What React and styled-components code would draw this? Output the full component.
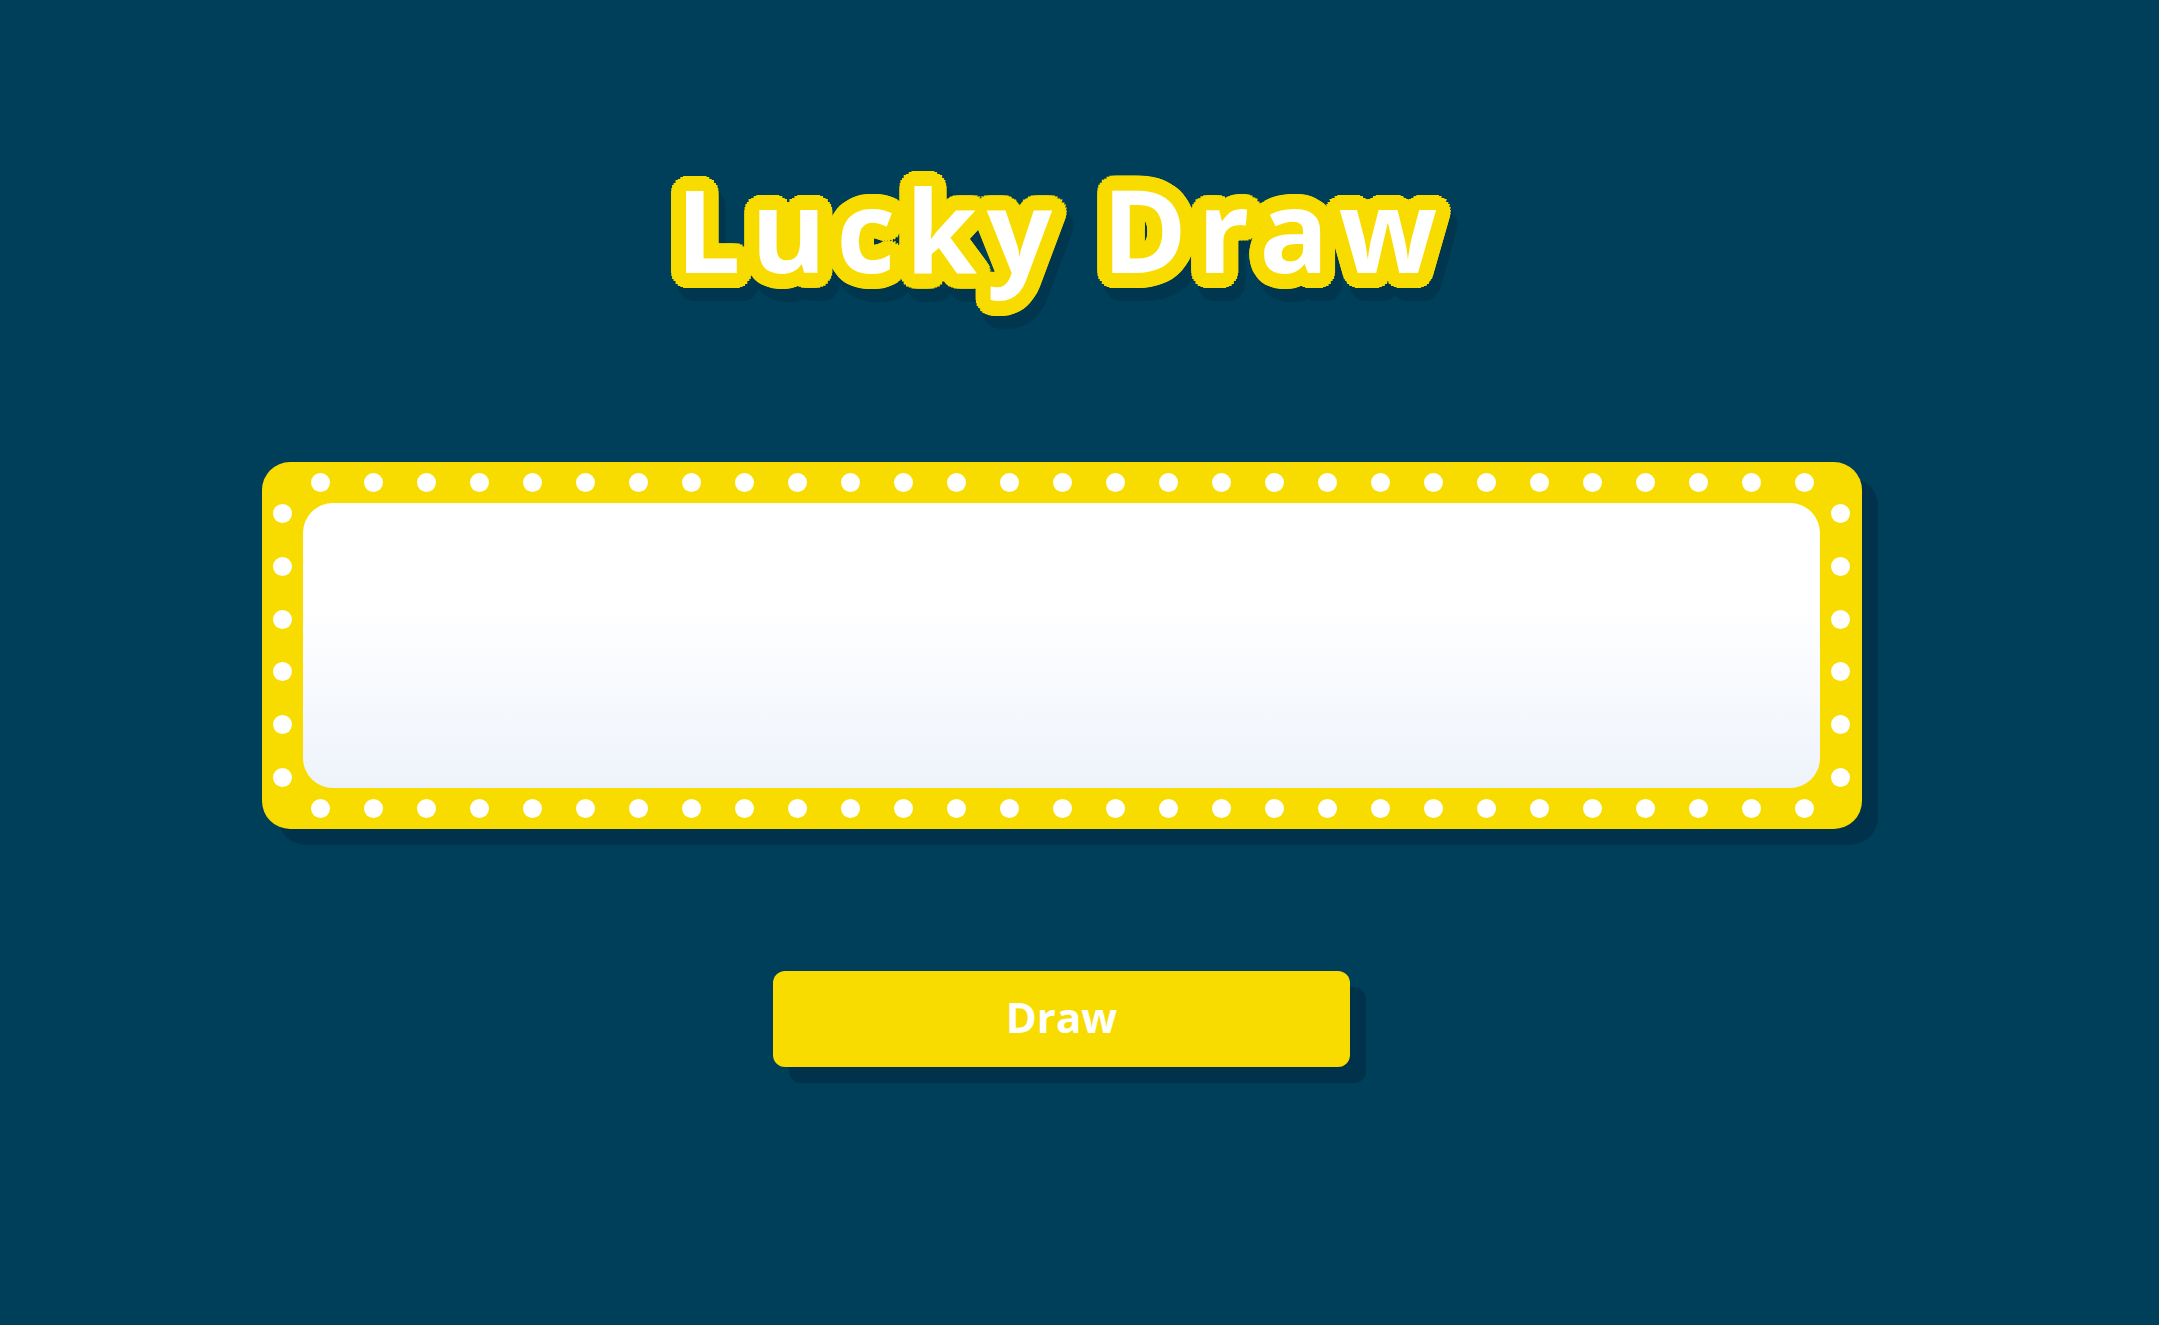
import React from 'react';
import styled, { createGlobalStyle } from 'styled-components';

const GlobalStyle = createGlobalStyle`
	html, body {
		margin: 0;
		padding: 0;
		background: #003f5a;
	}
	body {
		font-family: "Open Sans", "Liberation Sans", sans-serif;
	}
`;

// yellow outline built from rings of text-shadows, then the same ring again, darker and offset
const ring = (r, steps, dx, dy, colour) =>
	Array.from({ length: steps }, (_, i) => {
		const a = (i / steps) * Math.PI * 2;
		const x = (dx + Math.cos(a) * r).toFixed(1);
		const y = (dy + Math.sin(a) * r).toFixed(1);
		return `${x}px ${y}px 0 ${colour}`;
	});

const outline = [
	...ring(15, 32, 0, 0, '#f8dc00'),
	...ring(7.5, 12, 0, 0, '#f8dc00'),
	...ring(15, 32, 7, 13, '#00374f'),
	...ring(7.5, 12, 7, 13, '#00374f'),
].join(', ');

const Page = styled.main`
	box-sizing: border-box;
	min-height: 1325px;
	padding: 171px 36px 0 0;
	display: flex;
	flex-direction: column;
	align-items: center;
	background: #003f5a;
`;

const Title = styled.h1`
	margin: 0;
	font-family: "Open Sans", "Liberation Sans", sans-serif;
	font-weight: 700;
	font-size: 115px;
	line-height: 1;
	letter-spacing: 10px;
	color: #ffffff;
	text-shadow: ${outline};
`;

const Frame = styled.section`
	box-sizing: border-box;
	margin-top: 176px;
	width: 1600px;
	height: 367px;
	display: grid;
	grid-template-columns: 41px 1fr 42px;
	grid-template-rows: 41px 1fr 41px;
	background: #f8dc00;
	border-radius: 28px;
	box-shadow: 16px 16px 0 #00324b;
`;

const DotRow = styled.div`
	grid-column: 1 / -1;
	display: flex;
	align-items: center;
	justify-content: space-between;
	padding: 0 48px 0 49px;
`;

const DotColumn = styled.div`
	display: flex;
	flex-direction: column;
	align-items: center;
	justify-content: space-between;
	padding: 1px 0;
`;

const Bulb = styled.span`
	display: block;
	width: 19px;
	height: 19px;
	border-radius: 50%;
	background: #ffffff;
`;

const Screen = styled.div`
	border-radius: 30px;
	background: linear-gradient(to bottom, #ffffff 35%, #eef3fb 100%);
`;

const DrawButton = styled.button`
	margin-top: 142px;
	width: 577px;
	height: 96px;
	padding: 0 0 5px;
	border: 0;
	border-radius: 12px;
	background: #f8dc00;
	box-shadow: 16px 16px 0 #00324b;
	color: #ffffff;
	font-family: "Open Sans", "Liberation Sans", sans-serif;
	font-weight: 700;
	font-size: 42px;
	cursor: pointer;
`;

const bulbs = (n) => Array.from({ length: n }, (_, i) => <Bulb key={i} />);

export default function App() {
	return (
		<>
			<GlobalStyle />
			<Page>
				<Title>Lucky Draw</Title>
				<Frame>
					<DotRow>{bulbs(29)}</DotRow>
					<DotColumn>{bulbs(6)}</DotColumn>
					<Screen />
					<DotColumn>{bulbs(6)}</DotColumn>
					<DotRow>{bulbs(29)}</DotRow>
				</Frame>
				<DrawButton>Draw</DrawButton>
			</Page>
		</>
	);
}
